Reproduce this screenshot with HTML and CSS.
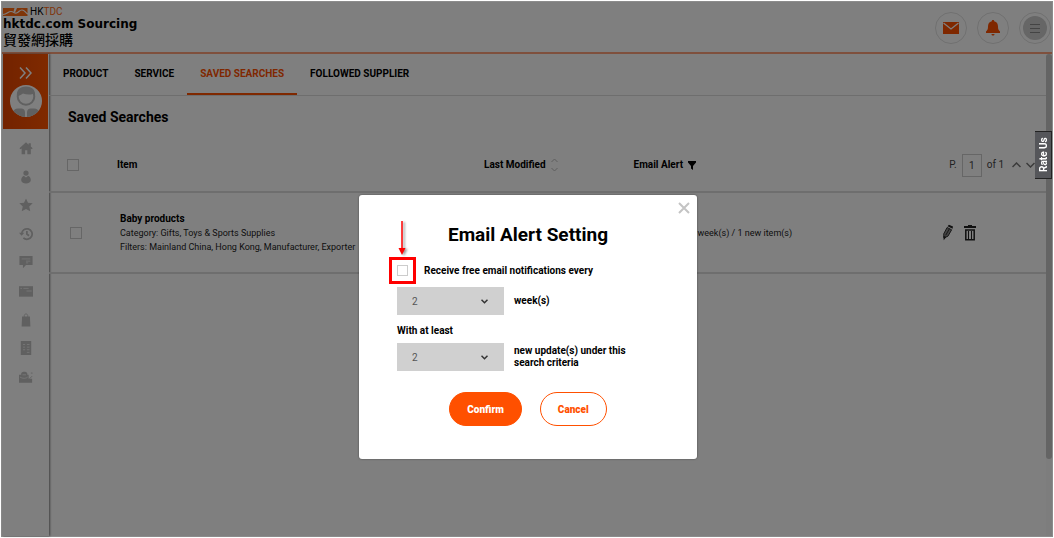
FILE: index.html
```html
<!DOCTYPE html>
<html lang="en">
<head>
    <meta charset="UTF-8">
    <meta name="viewport" content="width=device-width, initial-scale=1.0">
    <title>Saved Searches - hktdc.com Sourcing</title>
    <link rel="stylesheet" href="styles.css">
</head>
<body>
    <div class="app">
        <header class="header">
            <a class="brand" href="#">
                <span class="brand-logo">
                    <svg width="25" height="8" viewBox="0 0 25 8"><path fill="#ff6a13" d="M0 0h24.500v8H0z"/><path fill="none" stroke="#fff" stroke-width="1.200" d="M0 6.500C4 6.500 5 3.500 8 3.500s3 2 5.500 1.500S16 2 19 2s3 2.500 6 4"/><path fill="#fff" d="M11.500 0h2.500l-2 4.500-1.500-1z"/></svg>
                    HK<b>TDC</b>
                </span>
                <span class="brand-name">hktdc.com Sourcing</span>
                <span class="brand-zh" lang="zh-Hant">貿發網採購</span>
            </a>
            <div class="header-actions">
                <button class="round-btn" aria-label="Messages">
                    <svg width="16" height="12" viewBox="0 0 16 12"><path fill="#ff5000" d="M0 0h16v12H0z"/><path fill="none" stroke="#fff" stroke-width="1.300" d="M0.500 1 8 7l7.500-6"/></svg>
                </button>
                <button class="round-btn" aria-label="Notifications">
                    <svg width="14" height="16" viewBox="0 0 14 16"><path fill="#ff5000" d="M7 0c.8 0 1.200.5 1.200 1.200C10.800 1.800 12 3.800 12 6.500c0 2.500.5 3.500 2 5V13H0v-1.500c1.500-1.500 2-2.500 2-5 0-2.700 1.200-4.700 3.800-5.300C5.800.5 6.200 0 7 0zM5.500 14h3c0 1-.6 1.600-1.500 1.600S5.500 15 5.500 14z"/></svg>
                </button>
                <button class="round-btn" aria-label="Menu">
                    <span class="menu-disc">
                        <svg width="10" height="10" viewBox="0 0 10 10"><path stroke="#888" d="M0 1.500h10M0 5.500h10M0 9.500h10"/></svg>
                    </span>
                </button>
            </div>
        </header>

        <div class="body">
            <aside class="sidebar">
                <div class="profile">
                    <button class="expand" aria-label="Expand menu">
                        <svg width="13" height="12" viewBox="0 0 13 12"><path fill="none" stroke="#fff" stroke-width="1.500" d="M1 .5 6 6l-5 5.500M7 .5 12 6l-5 5.500"/></svg>
                    </button>
                    <svg width="32" height="32" viewBox="0 0 32 32"><defs><clipPath id="disc"><circle cx="16" cy="16" r="16"/></clipPath></defs><circle cx="16" cy="16" r="16" fill="#fff"/><g clip-path="url(#disc)"><path fill="#c0c0c0" d="M3 32v-4c0-3 2-4.500 5-4.500h3.500c2 0 3.500 1.500 3.500 4V32zM29 32v-4c0-3-2-4.500-5-4.500h-3.500c-2 0-3.500 1.500-3.500 4V32z"/><circle cx="16" cy="11.500" r="8.300" fill="#fff" stroke="#c0c0c0" stroke-width="2"/><path fill="#c0c0c0" d="M7 11.500C6 5 10 1.500 16 1.500S26 5 25 11.500l-2-2.500c-4 1-7 .5-10-.5-1.500 1-3 2-6 3z"/></g></svg>
                </div>
                <nav class="side-nav">
                    <a href="#" aria-label="Home"><svg viewBox="0 0 16 16"><path d="M8 1.500.5 8.200l1.200 1.300L3 8.500V15h4v-4.500h2.500V15H13.500V8.500l1 1 1.200-1.300-2.200-2V2.500h-2.500v1.700z"/></svg></a>
                    <a href="#" aria-label="Profile"><svg viewBox="0 0 16 16"><circle cx="8" cy="3.500" r="3"/><path d="M5.500 6.500 8 8.500l2.500-2c2 1 3 3 3 5 0 2.500-2.300 4-5.500 4s-5.500-1.500-5.500-4c0-2 1-4 3-5z"/></svg></a>
                    <a href="#" aria-label="Favourites"><svg viewBox="0 0 16 16"><path d="m8 .5 2.300 5 5.400.6-4 3.700 1.200 5.400L8 12.500l-4.900 2.700 1.200-5.400-4-3.700 5.400-.6z"/></svg></a>
                    <a href="#" aria-label="History"><svg viewBox="0 0 16 16"><path class="line" d="M3 8a6 6 0 1 1 2 4.500M9 4.500V8l2.500 2"/><path d="M0 6.500h6L3 10z"/></svg></a>
                    <a href="#" aria-label="Messages"><svg viewBox="0 0 16 16"><path d="M.5 1h15v10.500H8L4.500 15v-3.500h-4z"/><path class="cut" d="M3 4.500h10M8 7h5M8 9h2.500"/></svg></a>
                    <a href="#" aria-label="Cards"><svg viewBox="0 0 16 16"><path d="M0 2.500h16v12H0z"/><path class="cut" d="M1.500 5h2M5 5h6M8.500 8h6"/></svg></a>
                    <a href="#" aria-label="Orders"><svg viewBox="0 0 16 16"><path d="M3.500 4h9l.5 11.500H3z"/><path class="line thin" d="M6 6V3C6 .5 10 .5 10 3v3"/></svg></a>
                    <a href="#" aria-label="Forms"><svg viewBox="0 0 16 16"><path d="M2 0h12v16H2z"/><path class="cut" d="M4.500 4H7M9 4h3M4.500 7H7M9 7h3M4.500 10H7M9 10h3M9 13h3"/></svg></a>
                    <a href="#" aria-label="Business"><svg viewBox="0 0 16 16"><path d="M0 5.500h2.500V4c0-2.500 7-2.500 7 0v1.500H11V10h4v4.500H0z"/><path class="cut" d="M4 5.500h4M1 8c3 2 7 2 9 0"/><path class="line thin" d="m12 10 3-3M13.500 3.500h2"/></svg></a>
                </nav>
            </aside>

            <main class="main">
                <nav class="tabs">
                    <a href="#">PRODUCT</a>
                    <a href="#">SERVICE</a>
                    <a href="#" class="active">SAVED SEARCHES</a>
                    <a href="#">FOLLOWED SUPPLIER</a>
                </nav>
                <h1 class="page-title">Saved Searches</h1>
                <table class="searches">
                    <colgroup>
                        <col class="col-check">
                        <col class="col-item">
                        <col class="col-modified">
                        <col class="col-alert">
                        <col class="col-actions">
                    </colgroup>
                    <thead>
                        <tr>
                            <th><input type="checkbox" aria-label="Select all"></th>
                            <th>Item</th>
                            <th>
                                <span class="th-label">Last Modified
                                    <svg width="7" height="14" viewBox="0 0 7 14"><path fill="none" stroke="#bbb" d="m.5 4 3-3 3 3M.5 10l3 3 3-3"/></svg>
                                </span>
                            </th>
                            <th>
                                <span class="th-label">Email Alert
                                    <svg width="8" height="9" viewBox="0 0 8 9"><path d="M0 0h8v1.500L5 5v4L3 7.500V5L0 1.500z"/></svg>
                                </span>
                            </th>
                            <th>
                                <div class="pager">
                                    <label for="page">P.</label>
                                    <input id="page" type="text" value="1">
                                    <span class="pager-total">of 1</span>
                                    <button aria-label="Previous page"><svg width="9" height="6" viewBox="0 0 9 6"><path fill="none" stroke="#777" stroke-width="1.500" d="m.5 5 4-4 4 4"/></svg></button>
                                    <button aria-label="Next page"><svg width="9" height="6" viewBox="0 0 9 6"><path fill="none" stroke="#777" stroke-width="1.500" d="m.5 1 4 4 4-4"/></svg></button>
                                </div>
                            </th>
                        </tr>
                    </thead>
                    <tbody>
                        <tr>
                            <td><input type="checkbox" aria-label="Select Baby products"></td>
                            <td>
                                <strong>Baby products</strong><br>
                                Category: Gifts, Toys &amp; Sports Supplies<br>
                                Filters: Mainland China, Hong Kong, Manufacturer, Exporter
                            </td>
                            <td></td>
                            <td class="alert-cell">week(s) / 1 new item(s)</td>
                            <td>
                                <div class="row-actions">
                                    <button aria-label="Edit"><svg width="10" height="17" viewBox="0 0 11 17"><path fill="#222" d="M5 1.500 6.500 0l4.500 2-.5 2.500z"/><path fill="#888" stroke="#222" d="m4.500 3 5 2.500-4 7L1 14.500.8 10z"/><path stroke="#222" d="m7 4.500-4 7"/><path fill="#222" d="m.5 12 3 1.500L.8 17z"/></svg></button>
                                    <button aria-label="Delete"><svg width="12" height="16" viewBox="0 0 12 16"><path fill="#222" d="M4 0h4v1h4v2H0V1h4z"/><path fill="none" stroke="#222" stroke-width="1.500" d="M1.800 5h8.400v9.800H1.800z"/><path stroke="#222" d="M4.500 6v8M7.500 6v8"/></svg></button>
                                </div>
                            </td>
                        </tr>
                    </tbody>
                </table>
            </main>
            <div class="scrollbar"><div class="scroll-thumb"></div></div>
        </div>

        <div class="overlay">
            <form class="modal" role="dialog" aria-labelledby="modalTitle">
                <button type="button" class="close" aria-label="Close">
                    <svg width="12" height="12" viewBox="0 0 12 12"><path stroke="#c4c4c4" stroke-width="2" d="m1 1 10 10M11 1 1 11"/></svg>
                </button>
                <h2 id="modalTitle">Email Alert Setting</h2>
                <div class="notify">
                    <span class="marked">
                        <input type="checkbox" id="notify">
                        <svg class="arrow" width="8" height="34" viewBox="0 0 8 34"><path stroke="#f00" stroke-width="1.500" d="M4 0v29"/><path fill="#f00" d="M.5 27h7L4 34z"/></svg>
                    </span>
                    <label for="notify">Receive free email notifications every</label>
                </div>
                <div class="field">
                    <span class="select">
                        <select id="weeks"><option>1</option><option selected>2</option><option>3</option></select>
                        <svg width="7" height="5" viewBox="0 0 7 5"><path fill="none" stroke="#333" stroke-width="1.500" d="m.5.8 3 3 3-3"/></svg>
                    </span>
                    <label for="weeks">week(s)</label>
                </div>
                <p class="at-least">With at least</p>
                <div class="field">
                    <span class="select">
                        <select id="updates"><option>1</option><option selected>2</option><option>3</option></select>
                        <svg width="7" height="5" viewBox="0 0 7 5"><path fill="none" stroke="#333" stroke-width="1.500" d="m.5.8 3 3 3-3"/></svg>
                    </span>
                    <label for="updates">new update(s) under this search criteria</label>
                </div>
                <div class="buttons">
                    <button type="button" class="btn btn-confirm">Confirm</button>
                    <button type="button" class="btn btn-cancel">Cancel</button>
                </div>
            </form>
        </div>
        <button class="rate-us">Rate Us</button>
    </div>
</body>
</html>
```
FILE: styles.css
```css
* {
    box-sizing: border-box;
}
body {
    margin: 0;
    padding: 1px;
    background: white;
    color: #000;
    font-family: Roboto, Arial, sans-serif;
    font-size: 10px;
    line-height: 14px;
}
svg {
    display: block;
    flex: none;
}
a {
    color: inherit;
    text-decoration: none;
}
button {
    padding: 0;
    border: none;
    background: none;
    font-family: inherit;
    cursor: pointer;
}
input[type="checkbox"] {
    appearance: none;
    display: block;
    width: 12px;
    height: 12px;
    margin: 0;
    border: 1px solid #ccc;
    background: white;
}

/* Page frame */
.app {
    position: relative;
    display: flex;
    flex-direction: column;
    min-height: calc(100vh - 2px);
    border: 1px solid #8c8c8c;
}
.header {
    display: flex;
    justify-content: space-between;
    height: 52px;
    padding: 4px 1px 0 1px;
    border-bottom: 2px solid #ffa07a;
}
.brand {
    display: flex;
    flex-direction: column;
}
.brand-logo {
    display: flex;
    align-items: center;
    gap: 2px;
    height: 11px;
    font-size: 10px;
    line-height: 10px;
}
.brand-logo b {
    margin-left: -2px;
    color: #ff6a13;
    font-weight: 400;
}
.brand-name {
    font-family: "DejaVu Sans", Verdana, sans-serif;
    font-size: 12px;
    font-weight: bold;
    line-height: 15px;
}
.brand-zh {
    font-family: "Noto Sans CJK TC", sans-serif;
    font-size: 14px;
    font-weight: 500;
    line-height: 14px;
}
.header-actions {
    display: flex;
    gap: 10px;
    padding-top: 6px;
}
.round-btn {
    display: flex;
    align-items: center;
    justify-content: center;
    width: 32px;
    height: 32px;
    border: 1px solid #e0e0e0;
    border-radius: 50%;
}
.menu-disc {
    display: flex;
    align-items: center;
    justify-content: center;
    width: 24px;
    height: 24px;
    border-radius: 50%;
    background: #ccc;
}
.body {
    display: flex;
    flex: 1;
}

/* Sidebar */
.sidebar {
    width: 47px;
    padding: 0 1px;
    box-shadow: 1px 0 2px rgba(0,0,0,0.5);
}
.profile {
    display: flex;
    flex-direction: column;
    align-items: center;
    gap: 6px;
    height: 75px;
    padding-top: 13px;
    background: linear-gradient(90deg, #e64600, #ff5500);
}
.side-nav {
    display: flex;
    flex-direction: column;
    justify-content: space-around;
    align-items: center;
    height: 262px;
    padding-top: 5px;
}
.side-nav svg {
    width: 14px;
    height: 14px;
    fill: #c0c0c0;
}
.side-nav .line {
    fill: none;
    stroke: #c0c0c0;
    stroke-width: 2;
}
.side-nav .thin {
    stroke-width: 1;
}
.side-nav .cut {
    fill: none;
    stroke: #eee;
    stroke-width: 1;
}

/* Main area */
.main {
    flex: 1;
    min-width: 0;
}
.tabs {
    display: flex;
    height: 42px;
    padding-left: 1px;
    border-bottom: 1px solid #ddd;
}
.tabs a {
    padding: 13px 13px 11px;
    border-bottom: 2px solid transparent;
    font-weight: 700;
}
.tabs .active {
    color: #ff5000;
    border-bottom-color: #ff5000;
}
.page-title {
    margin: 0;
    padding: 11px 19px 10px;
    font-size: 14px;
    line-height: 20px;
}
.searches {
    width: 100%;
    border-collapse: collapse;
    table-layout: fixed;
}
.col-check { width: 68px; }
.col-item { width: 367px; }
.col-modified { width: 15%; }
.col-alert { width: 31%; }
.searches th,
.searches td {
    padding: 0;
    border-bottom: 2px solid #ddd;
    text-align: left;
}
.searches th {
    height: 55px;
    padding-top: 2px;
}
.searches td {
    height: 81px;
    padding-left: 3px;
    color: #222;
    font-size: 9px;
}
.searches td strong {
    color: #000;
    font-size: 10px;
}
.searches th:first-child {
    padding-left: 18px;
}
.searches td:first-child {
    padding-left: 21px;
}
.searches td.alert-cell {
    padding-left: 64px;
}
.searches td:last-child {
    padding-left: 0;
}
.th-label {
    display: flex;
    align-items: center;
    gap: 5px;
}
.pager {
    display: flex;
    align-items: center;
    justify-content: flex-end;
    gap: 5px;
    padding-right: 11px;
    color: #444;
    font-weight: 400;
}
.pager input {
    width: 20px;
    height: 23px;
    padding: 0;
    border: 1px solid #ccc;
    background: white;
    color: #444;
    font: inherit;
    text-align: center;
}
.pager-total {
    margin-right: 3px;
}
.row-actions {
    display: flex;
    align-items: center;
    gap: 11px;
}
.scrollbar {
    width: 6px;
    background: #fafafa;
}
.scroll-thumb {
    height: 84%;
    border-radius: 3px;
    background: #c8c8c8;
}

/* Email alert dialog */
.overlay {
    position: absolute;
    inset: 0;
    display: flex;
    align-items: flex-start;
    justify-content: center;
    padding: 193px 0 0 2px;
    background: rgba(0,0,0,0.5);
}
.modal {
    position: relative;
    width: 338px;
    padding: 28px 38px 33px;
    border-radius: 3px;
    background: white;
    box-shadow: 0 0 2px rgba(0,0,0,0.5);
    font-weight: 700;
}
.close {
    position: absolute;
    top: 7px;
    right: 7px;
}
.modal h2 {
    margin: 0;
    font-size: 19px;
    line-height: 24px;
    text-align: center;
}
.notify {
    display: flex;
    align-items: center;
    gap: 8px;
    margin: 10px 0 3px -8px;
}
.marked {
    position: relative;
    padding: 5px;
    border: 3px solid #f00;
}
.marked input[type="checkbox"] {
    width: 11px;
    height: 11px;
}
.arrow {
    position: absolute;
    left: 6px;
    bottom: 26px;
    filter: drop-shadow(2px 1px 1px rgba(0,0,0,0.4));
}
.field {
    display: flex;
    align-items: center;
    gap: 10px;
    line-height: 12px;
}
.field label {
    width: 115px;
}
.select {
    position: relative;
}
.select select {
    appearance: none;
    display: block;
    width: 107px;
    height: 28px;
    padding: 0 15px;
    border: none;
    border-radius: 0;
    background: #d0d0d0;
    color: #555;
    font-family: inherit;
    font-size: 10px;
}
.select svg {
    position: absolute;
    top: 12px;
    right: 16px;
    pointer-events: none;
}
.at-least {
    margin: 9px 0 5px;
}
.buttons {
    display: flex;
    justify-content: center;
    gap: 18px;
    margin-top: 21px;
}
.btn {
    height: 34px;
    padding: 0 17px;
    border: 1px solid #ff5000;
    border-radius: 17px;
    font-size: 10px;
    font-weight: 900;
}
.btn-confirm {
    background: #ff5000;
    color: white;
}
.btn-cancel {
    background: white;
    color: #ff5000;
}
.rate-us {
    position: absolute;
    top: 129px;
    right: 0;
    width: 17px;
    height: 48px;
    border: 1px solid #222;
    border-right: none;
    background: #55565a;
    color: white;
    font-size: 10px;
    font-weight: 700;
    writing-mode: vertical-rl;
    rotate: 180deg;
}
```
